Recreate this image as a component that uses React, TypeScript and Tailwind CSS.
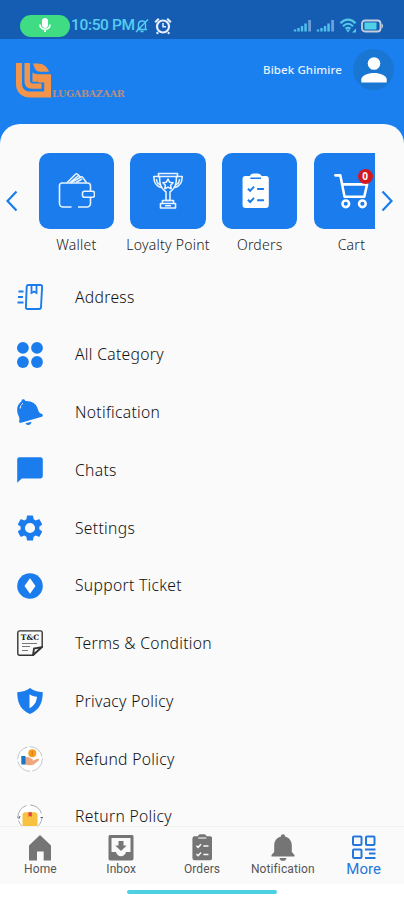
import React from 'react';

const BLUE = '#1a7ced';

// ---------- Status bar icons ----------
const BellOff = () => (
  <svg width="14" height="15" viewBox="0 0 14 15" fill="none" stroke="#56cdf3" strokeWidth="1.4">
    <path d="M2 11.500h10M3.500 11V6.500C3.500 4.300 5 3 7 3s3.500 1.300 3.500 3.500V11M5.500 13.500h3M1 14L13 1.500" />
  </svg>
);

const AlarmClock = () => (
  <svg width="18" height="18" viewBox="0 0 18 18" fill="none" stroke="#e6eeff">
    <circle cx="9" cy="9.500" r="6" strokeWidth="2.200" />
    <path d="M9 6v3.700h3" strokeWidth="1.500" />
    <path d="M1.200 5.200l3.600-3.400M16.800 5.200l-3.600-3.400M4 15.200l-1.200 1.500M14 15.200l1.200 1.500" strokeWidth="2.200" />
  </svg>
);

const Signal = () => (
  <svg width="19" height="13" viewBox="0 0 19 13">
    <path d="M.8 10.500h2.400v2H.8zM4.300 9h2.400v3.500H4.300zM7.800 7h2.400v5.500H7.800zM11.300 4.500h2.500v8h-2.500z" fill="#4fc0ec" />
    <path d="M15.200 1h2.800v11.500h-2.800z" fill="#6d9fd6" />
  </svg>
);

const Wifi = () => (
  <svg width="18" height="15" viewBox="0 0 18 15" fill="none" stroke="#55c8e8" strokeWidth="2.200">
    <path d="M1.500 5.200C6 .4 12 .4 16.500 5.200M4 8.200c3.200-3.200 6.800-3.200 10 0M6.500 10.800c1.600-1.500 3.400-1.500 5 0" />
    <path d="M9 14.500l-2.200-3h4.400zM13 14.500l4-4v4z" fill="#55c8e8" stroke="none" />
  </svg>
);

const Battery = () => (
  <svg width="23" height="14" viewBox="0 0 23 14">
    <rect x="1" y="1.500" width="18.500" height="11" rx="3" fill="none" stroke="#c3cfdf" strokeWidth="1.800" />
    <path d="M20.500 4.500c2 .5 2 4.500 0 5z" fill="#c3cfdf" />
    <rect x="3.500" y="3.500" width="12" height="7" fill="#4fd2e5" />
  </svg>
);

const Logo = () => (
  <svg width="36" height="36" viewBox="0 0 36 36" fill="#f2954a">
    <path d="M0 0h6v20.500c0 5.500 3.500 8 8 8h14.200V19.500H22V14h13v20.500H14C5.500 34.500 0 29 0 21z" />
    <path d="M8.500 0H14v17.500c0 2 1 3 3 3h8.500v5.200h-9.200c-5 0-7.800-2.700-7.800-7.500z" />
    <path d="M17 .5h4.500C27.500.5 31 3.500 33 8.700H24.500c-3 0-4.500-1-5.500-3zM16.500 9.500c1.500 1.200 3 1.700 5 1.700H35v4H21.800v3.500h-5.300z" />
  </svg>
);

// ---------- Shortcut icons ----------
const WalletIcon = () => (
  <svg width="38" height="38" viewBox="0 0 38 38" fill="none" stroke="#e9f3ff" strokeWidth="1.600" strokeLinejoin="round">
    <path d="M14.500 35H6a3.500 3.500 0 0 1-3.500-3.500v-18A2.500 2.500 0 0 1 5 11h25.500a3 3 0 0 1 3 3v5.300M33.500 25.500v6A3.500 3.500 0 0 1 30 35H21" />
    <rect x="25.500" y="19.300" width="12" height="6" rx="2" />
    <path d="M10 10.800l8.500-8.600c.7-.6 1.300-.6 2 .1l2.700 2.600M14 10.800l9.700-5.800c.8-.5 1.400-.4 2 .4l3.800 5.400M13 10.500l8-6.500M19 10.500l6-3.500" />
  </svg>
);

const TrophyIcon = () => (
  <svg width="32" height="38" viewBox="0 0 32 38" fill="none" stroke="#e9f3ff" strokeWidth="1.600" strokeLinejoin="round">
    <path d="M6.500 1.500h19v3h-19zM7.500 4.500c0 8 1.200 11.500 6.500 15.500v8.500h4V20c5.300-4 6.500-7.500 6.500-15.500" />
    <path d="M7.500 4.500H1.800c0 7 2.500 9.500 7.200 11M9 13c-3-.8-4.500-3-4.500-6M24.500 4.500h5.700c0 7-2.500 9.500-7.200 11M23 13c3-.8 4.500-3 4.500-6" />
    <path d="M16 7l1.600 3.200 3.500.5-2.500 2.500.6 3.500-3.200-1.600-3.200 1.600.6-3.500-2.500-2.500 3.500-.5z" />
    <path d="M10.500 28.500h11v3h-11zM8.500 31.500h15V36h-15zM13 33.800h6" />
  </svg>
);

const Clipboard = ({ size, color, mark }: { size: number; color: string; mark: string }) => (
  <svg width={size * 0.76} height={size} viewBox="0 0 28 37" fill="none">
    <path d="M3.500 3H8c.7-2 2.500-2.500 6-2.500S19.300 1 20 3h4.500A3 3 0 0 1 27.500 6v27a3 3 0 0 1-3 3h-21a3 3 0 0 1-3-3V6a3 3 0 0 1 3-3z" fill={color} />
    <path d="M8.500 5.500h11" stroke={mark} strokeWidth="1.500" />
    <path d="M6 16l2.300 2.300 4-4.300M6 27.500l2.300 2.300 4-4.300M15.500 16.500h7M15.500 28h7" stroke={mark} strokeWidth="2" />
  </svg>
);

const CartIcon = () => (
  <svg width="36" height="38" viewBox="0 0 38 38" fill="none" stroke="#fff" strokeWidth="2.700" strokeLinecap="round" strokeLinejoin="round">
    <path d="M2.500 2.500h5.200l4.500 22.500h20.800L36 12H9.500" />
    <circle cx="13.500" cy="32.500" r="3.500" />
    <circle cx="31" cy="32.500" r="3.500" />
  </svg>
);

// ---------- Menu icons ----------
const AddressIcon = () => (
  <svg width="26" height="26" viewBox="0 0 26 26" fill="none" stroke={BLUE}>
    <path d="M11.500 1h12c1 0 1.700.7 1.600 1.700l-1.100 20.500c-.1 1.200-.8 1.800-1.900 1.800H10.500c-1.100 0-1.700-.7-1.600-1.800L9.700 2.600C9.800 1.500 10.400 1 11.500 1z" strokeWidth="1.900" />
    <path d="M14.500 1v8l2.500-1.500L19.500 9V1" strokeWidth="1.800" />
    <path d="M1.500 7.500H6.500M1 13h5M.5 18.500h6" strokeWidth="2" />
  </svg>
);

const CategoryIcon = () => (
  <svg width="26" height="26" viewBox="0 0 26 26" fill={BLUE}>
    <circle cx="5.900" cy="5.900" r="5.900" />
    <circle cx="20" cy="5.900" r="5.900" />
    <circle cx="5.900" cy="20" r="5.900" />
    <circle cx="20" cy="20" r="5.900" />
  </svg>
);

const BellIcon = () => (
  <svg width="26" height="26" viewBox="0 0 26 26" fill={BLUE}>
    <path d="M4.500 2.300C4.500.8 5.500.2 6.500.3c1 .1 1.600.8 1.700 1.600 6.300-.3 11.300 2.500 12.600 8 .7 2.900 1.500 4 4.100 5 1.300.5 1.200 2.400 0 2.900L4 23.800c-1.400.3-2.400-.8-1.800-2.100.8-2.200-.3-4.200-1.400-6.700C-.9 9.800.8 5 4.500 2.300zM8.500 24.300l6-1.500c-.2 3.600-4.800 4.300-6 1.500z" />
    <path d="M3.300 9.500C3.200 7 4.300 5.300 6 4.300" fill="none" stroke="#fff" strokeWidth="1" strokeDasharray="3 1" />
  </svg>
);

const ChatIcon = () => (
  <svg width="26" height="26" viewBox="0 0 26 26" fill={BLUE}>
    <path d="M2.500.3h21A2.300 2.300 0 0 1 25.800 2.600v16.500a2.300 2.300 0 0 1-2.300 2.300H4.800L.2 25.800V2.600A2.300 2.300 0 0 1 2.500.3z" />
  </svg>
);

const GearIcon = () => (
  <svg width="26" height="26" viewBox="2 2 20 20" fill={BLUE}>
    <path d="M19.140 12.940c.04-.3.060-.61.060-.94 0-.32-.02-.64-.07-.94l2.030-1.580c.18-.14.230-.41.120-.61l-1.920-3.320c-.12-.22-.37-.29-.59-.22l-2.390.96c-.5-.38-1.030-.7-1.620-.94l-.36-2.540c-.04-.24-.24-.41-.48-.41h-3.840c-.24 0-.43.170-.47.410l-.36 2.540c-.59.240-1.130.570-1.620.94l-2.390-.96c-.22-.08-.47 0-.59.220L2.740 8.870c-.12.210-.08.470.12.610l2.030 1.580c-.05.300-.09.630-.09.940s.02.640.07.940l-2.030 1.580c-.18.140-.23.410-.12.610l1.920 3.320c.12.220.37.290.59.220l2.390-.96c.5.380 1.030.700 1.620.940l.36 2.540c.05.240.240.410.480.410h3.840c.24 0 .44-.17.470-.41l.36-2.540c.59-.24 1.130-.56 1.620-.94l2.390.96c.22.080.47 0 .59-.22l1.920-3.320c.12-.22.070-.47-.12-.61l-2.010-1.580zM12 15.900A3.900 3.900 0 1 1 12 8.100a3.900 3.900 0 0 1 0 7.800z" />
  </svg>
);

const TicketIcon = () => (
  <svg width="26" height="26" viewBox="0 0 26 26">
    <circle cx="13" cy="13" r="12.800" fill={BLUE} />
    <path d="M13 5.200L18.500 13 13 20.800 7.500 13z" fill="#fff" />
  </svg>
);

const TermsIcon = () => (
  <svg width="26" height="26" viewBox="0 0 26 26" fill="none" stroke="#333">
    <path d="M2.500.9h21c1 0 1.700.7 1.700 1.700V17l-9 8.200H2.500c-1 0-1.700-.7-1.700-1.700V2.600c0-1 .7-1.700 1.700-1.700z" strokeWidth="1.400" />
    <path d="M16 25l1-6.500 8-1.500z" fill="#fff" strokeWidth="1.800" />
    <path d="M5 13.500h15M5 16.500h8M5 20.500h6" strokeWidth="1.200" stroke="#777" />
    <text x="13" y="10.300" textAnchor="middle" fontFamily="DejaVu Serif" fontWeight="bold" fontSize="7.500" fill="#222" stroke="none">T&amp;C</text>
  </svg>
);

const ShieldIcon = () => (
  <svg width="26" height="26" viewBox="0 0 26 26">
    <path d="M13 0c3.500 2.600 7.500 4 12.800 4.300-.2 9.500-2.500 17.500-12.800 21.700C2.700 21.800.4 13.800.2 4.300 5.500 4 9.500 2.600 13 0z" fill={BLUE} />
    <path d="M12.500 6.200c2 1.300 4.500 2.200 7.500 2.500-.5 5-2.500 9-7.500 11.500z" fill="#fff" />
  </svg>
);

const RefundIcon = () => (
  <svg width="26" height="26" viewBox="0 0 26 26">
    <circle cx="13" cy="13" r="12.300" fill="#fff" stroke="#c3c8cd" strokeWidth="1" strokeDasharray="17 2" />
    <circle cx="15.300" cy="7.300" r="4" fill="#f6a021" />
    <path d="M15.300 5v4.600" stroke="#e37d17" strokeWidth="1.200" />
    <path d="M8 11.500c3-1.200 4.700.4 6.500 1.300 1.500.6 2 1.700.5 2.100l4.800-2c1.900-.7 3 .8 1.500 2l-5 3.800c-2.700 1-5.300.2-8.300-.2z" fill="#efa57d" />
    <path d="M4.300 10h4.200v8.500H4.300z" fill="#1976c5" />
  </svg>
);

const ReturnIcon = () => (
  <svg width="26" height="26" viewBox="0 0 26 26">
    <circle cx="13" cy="13" r="12" fill="#fff" stroke="#a5b0b8" strokeWidth="1" strokeDasharray="15 3.800" />
    <path d="M5.500 9.700l2-1.500h11l2 1.500V23h-15z" fill="#f8c13f" />
    <path d="M11.500 8.200h3.300V13l-1.700-1.200-1.600 1.200z" fill="#e0404a" />
    <path d="M0 12.500l2 2 1-2.500M23.500 13.500h2.500" stroke="#4d6373" strokeWidth="1" fill="none" />
  </svg>
);

// ---------- Bottom navigation icons ----------
const HomeIcon = () => (
  <svg width="24" height="26" viewBox="0 0 24 26" fill="#757575">
    <path d="M12 0l11 10.500V25.500h-7.300v-9H9v9H1v-15z" />
  </svg>
);

const InboxIcon = () => (
  <svg width="26" height="26" viewBox="0 0 26 26" fill="#757575">
    <path fillRule="evenodd" d="M2.500 0h21C25 0 25.500.5 25.500 2v21.500c0 1.300-.5 2-2 2h-21c-1.500 0-2-.7-2-2V2C.5.5 1 0 2.500 0zM3.500 3V17H8c.5 2.500 2.700 4.300 5 4.300s4.500-1.800 5-4.300h4.500V3z" />
    <path d="M10.500 6h5v4.500h3.200L13 16l-5.700-5.500h3.200z" />
  </svg>
);

const NavBellIcon = () => (
  <svg width="24" height="28" viewBox="0 0 24 28" fill="#757575">
    <path d="M10 2.500C10 1 10.700.2 12 .2s2 .8 2 2.300c4.200 1 6.800 4.500 6.800 9V18l2.700 3v1.500H.5V21l2.700-3v-6.500c0-4.500 2.600-8 6.800-9zM8.500 24h7c-.4 2-1.600 2.800-3.500 2.800S8.900 26 8.500 24z" />
  </svg>
);

const MoreIcon = () => (
  <svg width="26" height="25" viewBox="0 0 26 25" fill="none" stroke="#2577dc" strokeWidth="2">
    <rect x="2" y="1.500" width="8.500" height="8.500" rx="1" />
    <rect x="15" y="1.500" width="8.500" height="8.500" rx="1" />
    <rect x="2" y="14.500" width="8.500" height="8.500" rx="1" />
    <path d="M14 14.500h10.500M18 18.500h6.500M14 23h10.500" />
  </svg>
);

const shortcuts = [
  { label: 'Wallet', icon: <WalletIcon /> },
  { label: 'Loyalty Point', icon: <TrophyIcon /> },
  { label: 'Orders', icon: <div className="mr-2"><Clipboard size={36} color="#fff" mark={BLUE} /></div> },
  { label: 'Cart', icon: <CartIcon />, badge: 0 },
];

const menuItems = [
  { label: 'Address', icon: <AddressIcon /> },
  { label: 'All Category', icon: <CategoryIcon /> },
  { label: 'Notification', icon: <BellIcon /> },
  { label: 'Chats', icon: <ChatIcon /> },
  { label: 'Settings', icon: <GearIcon /> },
  { label: 'Support Ticket', icon: <TicketIcon /> },
  { label: 'Terms & Condition', icon: <TermsIcon /> },
  { label: 'Privacy Policy', icon: <ShieldIcon /> },
  { label: 'Refund Policy', icon: <RefundIcon /> },
  { label: 'Return Policy', icon: <ReturnIcon /> },
];

const navItems = [
  { label: 'Home', icon: <HomeIcon /> },
  { label: 'Inbox', icon: <InboxIcon /> },
  { label: 'Orders', icon: <Clipboard size={27} color="#757575" mark="#fafafa" /> },
  { label: 'Notification', icon: <NavBellIcon /> },
  { label: 'More', icon: <MoreIcon />, active: true },
];

const App: React.FC = () => {
  return (
    <div className="flex h-[900px] w-[404px] flex-col overflow-hidden bg-[#1a80f0] font-['Noto_Sans',sans-serif]">
      {/* Status bar */}
      <div className="flex h-[39px] shrink-0 items-center bg-[#145db2] pt-[12px] pl-5 pr-5">
        <div className="flex h-[22px] w-[50px] items-center justify-center rounded-full bg-[#3fdc83]">
          <svg width="12" height="15" viewBox="0 0 12 15">
            <rect x="3" y="0" width="6" height="10" rx="3" fill="#fff" />
            <path d="M1 6.500c0 6.500 10 6.500 10 0M6 11v3" fill="none" stroke="#fff" strokeWidth="1.800" />
          </svg>
        </div>
        <span className="w-[64px] whitespace-nowrap pt-px pl-px font-['Roboto',sans-serif] text-[15.500px] font-medium tracking-[-0.350px] text-[#56cdf3]">10:50 PM</span>
        <div className="flex items-center gap-[5px] pl-px">
          <BellOff />
          <AlarmClock />
        </div>
        <div className="ml-auto flex items-center gap-[4px]">
          <Signal />
          <Signal />
          <Wifi />
          <Battery />
        </div>
      </div>

      {/* Header */}
      <div className="flex h-[85px] shrink-0 items-start justify-between pl-4 pr-[10px]">
        <div className="flex items-end pt-[24px]">
          <Logo />
          <span className="font-['DejaVu_Serif',serif] text-[9.500px] leading-[10px] font-bold tracking-[-0.250px] text-[#b98d80]">LUGABAZAAR</span>
        </div>
        <div className="flex items-center gap-[11px] pt-[10px]">
          <span className="text-[11.500px] font-medium tracking-[0.100px] text-[#e8f2ff]">Bibek Ghimire</span>
          <div className="flex size-[41px] items-center justify-center rounded-full bg-[#1976d2]">
            <svg width="26" height="26" viewBox="0 0 26 26" fill="#fff">
              <circle cx="13" cy="6.500" r="6.300" />
              <path d="M.3 25.500v-3C.3 18.500 7 16 13 16s12.700 2.500 12.700 6.500v3z" />
            </svg>
          </div>
        </div>
      </div>

      {/* Content */}
      <div className="flex min-h-0 flex-1 flex-col overflow-hidden rounded-t-[20px] bg-[#fafafa]">
        <div className="flex h-[144px] shrink-0 pt-[29px]">
          <div className="flex w-[29px] shrink-0 justify-center pt-[37px] pr-[5px]">
            <svg width="12" height="22" viewBox="0 0 12 22" fill="none" stroke={BLUE} strokeWidth="2.200">
              <path d="M10.500 1.500L1.500 11l9 9.500" />
            </svg>
          </div>
          <div className="flex w-[346px] shrink-0 overflow-hidden">
            {shortcuts.map(s => (
              <div key={s.label} className="flex w-[91.700px] shrink-0 flex-col items-center pl-[3px]">
                <div className="relative flex size-[75.500px] shrink-0 items-center justify-center rounded-[10px] bg-[#1a7ced]">
                  {s.icon}
                  {s.badge !== undefined && (
                    <span className="absolute top-[16px] left-[44px] flex size-[15px] items-center justify-center rounded-full bg-[#d3191f] text-[10px] font-bold text-white">{s.badge}</span>
                  )}
                </div>
                <span className="mt-[6px] whitespace-nowrap text-[14px] leading-5 font-light tracking-[0.250px] text-[#222]">{s.label}</span>
              </div>
            ))}
          </div>
          <div className="flex flex-1 justify-center pt-[37px] pr-[5px]">
            <svg width="12" height="22" viewBox="0 0 12 22" fill="none" stroke={BLUE} strokeWidth="2.200">
              <path d="M1.500 1.500l9 9.500-9 9.500" />
            </svg>
          </div>
        </div>

        <div className="min-h-0 flex-1 overflow-hidden">
          {menuItems.map(item => (
            <div key={item.label} className="flex h-[57.750px] items-center pl-[17px]">
              <div className="w-[58px] shrink-0">{item.icon}</div>
              <span className="pt-px text-[15.700px] font-light tracking-[0.300px] text-[#111]">{item.label}</span>
            </div>
          ))}
        </div>
      </div>

      {/* Bottom navigation */}
      <div className="grid h-[58px] shrink-0 grid-cols-5 border-t border-[#f1f1f1] bg-[#fafafa] font-['Roboto',sans-serif]">
        {navItems.map(item => (
          <div key={item.label} className="flex flex-col items-center pt-[7px]">
            <div className="flex h-[27px] items-center">{item.icon}</div>
            <span className={item.active ? 'text-[15px] leading-[16px] text-[#2577dc]' : 'text-[12px] leading-[17px] tracking-[0.100px] text-[#555]'}>{item.label}</span>
          </div>
        ))}
      </div>
      <div className="flex h-4 shrink-0 justify-center bg-white pt-[6px]">
        <div className="h-[4px] w-[150px] rounded-full bg-[#4dd0e1]" />
      </div>
    </div>
  );
};

export default App;
